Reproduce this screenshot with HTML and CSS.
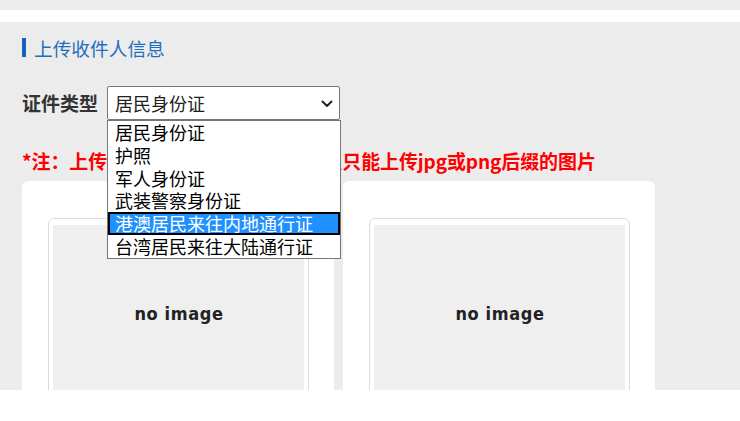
FILE: index.html
```html
<!DOCTYPE html>
<html lang="zh-CN">
<head>
<meta charset="utf-8">
<title>上传收件人信息</title>
<link rel="stylesheet" href="styles.css">
</head>
<body>
<div class="topbar"></div>
<div class="main">
  <div class="title"><span class="bar"></span><span class="title-text">上传收件人信息</span></div>
  <div class="form-row">
    <label class="label">证件类型</label>
    <div class="select-wrap">
      <div class="select">
        <span class="select-value">居民身份证</span>
        <svg class="chevron" width="12" height="8" viewBox="0 0 12 8"><polyline points="1.5,1.5 6,6 10.5,1.5" fill="none" stroke="#222" stroke-width="2" stroke-linecap="round" stroke-linejoin="round"/></svg>
      </div>
      <ul class="dropdown">
        <li class="option">居民身份证</li>
        <li class="option">护照</li>
        <li class="option">军人身份证</li>
        <li class="option">武装警察身份证</li>
        <li class="option selected">港澳居民来往内地通行证</li>
        <li class="option">台湾居民来往大陆通行证</li>
      </ul>
    </div>
  </div>
  <p class="note">*注：上传证件照片大小不超过2M，且只能上传jpg或png后缀的图片</p>
  <div class="cards">
    <div class="card">
      <div class="frame"><div class="noimg"><span>no image</span></div></div>
    </div>
    <div class="card">
      <div class="frame"><div class="noimg"><span>no image</span></div></div>
    </div>
  </div>
</div>
</body>
</html>
```
FILE: styles.css
```css
* { box-sizing: border-box; }
html, body { margin: 0; padding: 0; background: #fff; }
body {
  font-family: "Noto Sans CJK SC", "Noto Sans", sans-serif;
  width: 740px;
  height: 421px;
  overflow: hidden;
}
.topbar {
  height: 10px;
  background: #ececec;
  margin-bottom: 12px;
}
.main {
  background: #ececec;
  height: 368px;
  overflow: hidden;
  padding: 16px 0 0 22px;
}
.title {
  display: flex;
  align-items: center;
  height: 19px;
}
.bar {
  width: 4px;
  height: 19px;
  background: #1565c0;
  margin-right: 8px;
}
.title-text {
  font-size: 18.7px;
  line-height: 19px;
  color: #1f6fbf;
}
.form-row {
  display: flex;
  align-items: center;
  margin-top: 29px;
  height: 34px;
}
.label {
  font-size: 19px;
  font-weight: bold;
  color: #333;
  margin-right: 9px;
  line-height: 34px;
}
.select-wrap {
  position: relative;
  width: 233px;
  height: 34px;
}
.select {
  display: flex;
  align-items: center;
  justify-content: space-between;
  height: 34px;
  border: 1px solid #767676;
  border-radius: 2px;
  background: #fff;
  padding: 0 6px 0 7px;
}
.select-value {
  font-size: 18px;
  color: #222;
  line-height: 32px;
}
.chevron { display: block; margin-top: 1px; }
.dropdown {
  position: absolute;
  top: 34px;
  left: 0;
  width: 234px;
  margin: 0;
  padding: 0;
  list-style: none;
  background: #fff;
  border: 1px solid #767676;
  z-index: 5;
}
.option {
  height: 22.8px;
  line-height: 22.8px;
  font-size: 18px;
  color: #000;
  padding-left: 7px;
  white-space: nowrap;
}
.option.selected {
  background: #1e90ff;
  color: #fff;
  outline: 2px solid #000;
  outline-offset: -2px;
}
.note {
  margin: 29px 0 0 0;
  font-size: 19px;
  line-height: 24px;
  font-weight: bold;
  color: #ff0000;
  white-space: nowrap;
  letter-spacing: -0.1px;
}
.cards {
  display: flex;
  gap: 9px;
  margin-top: 8px;
}
.card {
  width: 312px;
  height: 260px;
  background: #fff;
  border-radius: 6px;
  padding: 37px 0 0 26px;
}
.frame {
  width: 261px;
  height: 220px;
  border: 1px solid #dcdcdc;
  border-radius: 6px;
  padding: 6px 4px 0 4px;
}
.noimg {
  height: 178px;
  background: #efefef;
  display: flex;
  align-items: center;
  justify-content: center;
}
.noimg span {
  font-family: "DejaVu Sans Condensed", "DejaVu Sans", sans-serif;
  font-weight: bold;
  font-size: 18px;
  line-height: 20px;
  letter-spacing: 0.6px;
  color: #222;
  margin-left: 1px;
}
```
